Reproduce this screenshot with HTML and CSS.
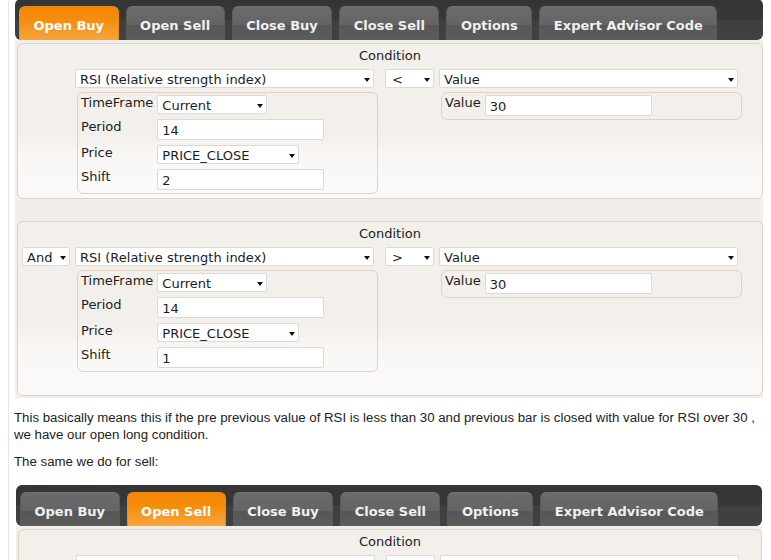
FILE: index.html
```html
<!DOCTYPE html>
<html>
<head>
<meta charset="utf-8">
<title>Expert Advisor Builder</title>
<link rel="stylesheet" href="styles.css">
</head>
<body>
<div class="page">
  <div class="tabs tabs-first">
    <ul class="tab-nav">
      <li class="tab active">Open Buy</li>
      <li class="tab">Open Sell</li>
      <li class="tab">Close Buy</li>
      <li class="tab">Close Sell</li>
      <li class="tab">Options</li>
      <li class="tab">Expert Advisor Code</li>
    </ul>
    <div class="tab-panel">
      <div class="cond">
        <div class="cond-title">Condition</div>
        <div class="cond-grid">
          <div></div>
          <div class="sel w-ind">RSI (Relative strength index)</div>
          <div class="sel w-op">&lt;</div>
          <div class="sel w-ind">Value</div>
          <div></div>
          <div class="params">
            <div class="lbl">TimeFrame</div><div class="sel w-cur">Current</div>
            <div class="lbl">Period</div><div class="inp w-num">14</div>
            <div class="lbl">Price</div><div class="sel w-price">PRICE_CLOSE</div>
            <div class="lbl">Shift</div><div class="inp w-num">2</div>
          </div>
          <div></div>
          <div class="params">
            <div class="lbl">Value</div><div class="inp w-num">30</div>
          </div>
        </div>
      </div>
      <div class="cond cond-tall">
        <div class="cond-title">Condition</div>
        <div class="cond-grid">
          <div class="sel w-and">And</div>
          <div class="sel w-ind">RSI (Relative strength index)</div>
          <div class="sel w-op">&gt;</div>
          <div class="sel w-ind">Value</div>
          <div></div>
          <div class="params">
            <div class="lbl">TimeFrame</div><div class="sel w-cur">Current</div>
            <div class="lbl">Period</div><div class="inp w-num">14</div>
            <div class="lbl">Price</div><div class="sel w-price">PRICE_CLOSE</div>
            <div class="lbl">Shift</div><div class="inp w-num">1</div>
          </div>
          <div></div>
          <div class="params">
            <div class="lbl">Value</div><div class="inp w-num">30</div>
          </div>
        </div>
      </div>
    </div>
  </div>

  <p class="note">This basically means this if the pre previous value of RSI is less than 30 and previous bar is closed with value for RSI over 30 , we have our open long condition.</p>
  <p class="note">The same we do for sell:</p>

  <div class="tabs tabs-second">
    <ul class="tab-nav">
      <li class="tab">Open Buy</li>
      <li class="tab active">Open Sell</li>
      <li class="tab">Close Buy</li>
      <li class="tab">Close Sell</li>
      <li class="tab">Options</li>
      <li class="tab">Expert Advisor Code</li>
    </ul>
    <div class="tab-panel">
      <div class="cond">
        <div class="cond-title">Condition</div>
        <div class="cond-grid">
          <div></div>
          <div class="sel w-ind">RSI (Relative strength index)</div>
          <div class="sel w-op">&gt;</div>
          <div class="sel w-ind">Value</div>
          <div></div>
          <div class="params">
            <div class="lbl">TimeFrame</div><div class="sel w-cur">Current</div>
            <div class="lbl">Period</div><div class="inp w-num">14</div>
            <div class="lbl">Price</div><div class="sel w-price">PRICE_CLOSE</div>
            <div class="lbl">Shift</div><div class="inp w-num">2</div>
          </div>
          <div></div>
          <div class="params">
            <div class="lbl">Value</div><div class="inp w-num">70</div>
          </div>
        </div>
      </div>
    </div>
  </div>
</div>
</body>
</html>
```
FILE: styles.css
```css
* { box-sizing: border-box; }
html, body { margin: 0; padding: 0; background: #fff; }
body {
  font-family: "DejaVu Sans", Verdana, sans-serif;
  font-size: 13px;
  color: #1c1c1c;
}
.page {
  margin-left: 8px;
  border-left: 1px solid #e6e6e6;
  padding-left: 5px;
  height: 560px;
  overflow: hidden;
}
.tabs { width: 748px; margin-left: 1px; }
.tabs-first { margin-top: -1px; }
.tabs-second { margin-top: 15px; margin-left: 2px; width: 746px; }

.tab-nav {
  list-style: none;
  margin: 0;
  padding: 7px 4px 0;
  display: flex;
  gap: 7px;
  border-radius: 6px;
  background: linear-gradient(#343434 0%, #383838 50%, #3f3f3f 51%, #414141 100%);
}
.tab {
  height: 34px;
  padding: 4px 13.5px 0;
  line-height: 29px;
  border: 1px solid #5a5a5a;
  border-top-color: #717171;
  border-bottom: 0;
  border-radius: 6px 6px 0 0;
  font-weight: bold;
  color: #f0f0f0;
  white-space: nowrap;
  background: linear-gradient(#6b6b6b 0%, #646464 55%, #575757 56%, #5c5c5c 100%);
}
.tab.active {
  color: #fff;
  border-color: #ef8c10;
  background: linear-gradient(#f38600 0%, #f48f12 45%, #f6a53e 100%);
}

.tab-panel {
  background: #f2eee9;
  padding: 3px 0 2px 2px;
}
.cond {
  border: 1px solid #e2d2c4;
  border-radius: 6px;
  padding: 3px 0 4px 0;
  background: linear-gradient(#f3efea 0%, #f3efea 58%, #f9f7f4 72%, #fbfaf8 100%);
}
.cond + .cond { margin-top: 22px; }
.cond-tall { padding-bottom: 23px; }
.cond-title { text-align: center; line-height: 18px; }
.cond-grid {
  margin-top: 4px;
  display: grid;
  grid-template-columns: 57px 310px 54px 310px;
  row-gap: 4px;
  align-items: start;
  justify-items: start;
}

.sel {
  position: relative;
  height: 19px;
  background: #fff;
  border: 1px solid #dadada;
  border-radius: 2px;
  padding: 2px 16px 0 4px;
  line-height: 15px;
  white-space: nowrap;
  overflow: hidden;
}
.sel::after {
  content: "";
  position: absolute;
  right: 3px;
  top: 8px;
  width: 0;
  height: 0;
  border-left: 3.5px solid transparent;
  border-right: 3.5px solid transparent;
  border-top: 4px solid #111;
}
.inp {
  height: 21px;
  background: #fff;
  border: 1px solid #d3dae3;
  border-radius: 2px;
  padding: 3px 4px 0;
  line-height: 15px;
}
.w-ind { width: 299px; }
.w-op { width: 49px; padding-left: 6px; }
.w-and { width: 48px; margin-left: 4px; }
.w-cur { width: 110px; }
.w-price { width: 142px; }
.w-num { width: 167px; }

.params {
  margin-left: 2px;
  width: 301px;
  border: 1px solid #e2d2c4;
  border-radius: 6px;
  padding: 2px 3px 3px;
  display: grid;
  grid-template-columns: auto 1fr;
  column-gap: 4px;
  row-gap: 5px;
  align-items: start;
  justify-items: start;
}
.lbl { line-height: 16px; white-space: nowrap; }

.note {
  font-family: "Liberation Sans", Arial, sans-serif;
  font-size: 13.25px;
  line-height: 17px;
  color: #222;
  margin: 11px 0 0;
}
.note + .note { margin-top: 10px; }
```
